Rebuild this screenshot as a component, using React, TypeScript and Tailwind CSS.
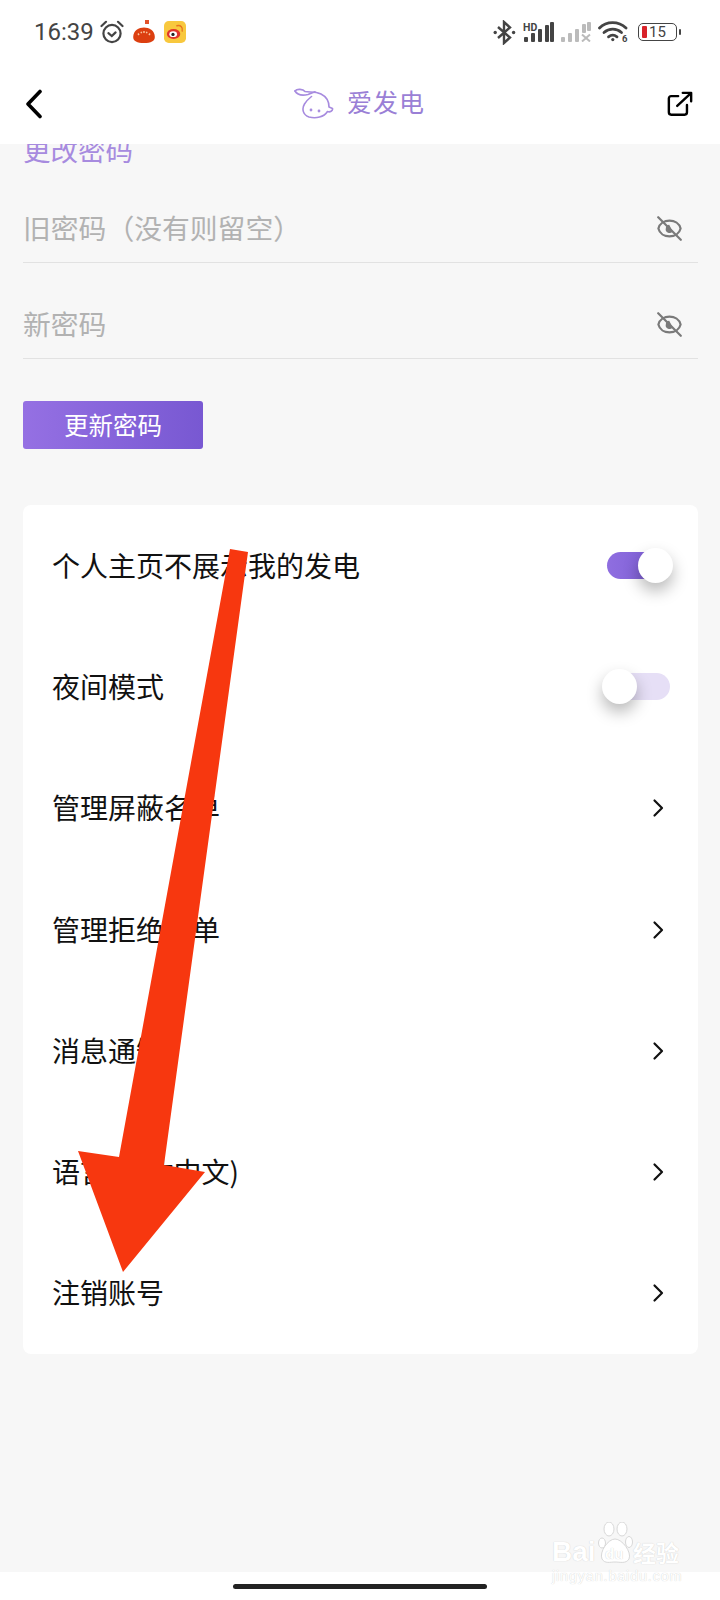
import React from "react";

const Chevron: React.FC = () => (
  <svg width="14" height="20" viewBox="0 0 14 20" fill="none" stroke="#111" strokeWidth="2.2" strokeLinecap="round" strokeLinejoin="round">
    <path d="M3.5 2.5 L11 10 L3.5 17.5" />
  </svg>
);

const EyeOff: React.FC = () => (
  <svg width="25" height="25" viewBox="0 0 25 25" fill="none" stroke="#7a7a7a" strokeWidth="2.2" strokeLinecap="round" strokeLinejoin="round">
    <path d="M1.4 12.5 C2.6 7.4 7.4 4.6 12.5 4.6 C17.6 4.6 22.4 7.4 23.6 12.5 C22.4 17.6 17.6 20.4 12.5 20.4 C7.4 20.4 2.6 17.6 1.4 12.5 Z" />
    <path d="M1.2 1.2 L23.8 23.8" />
    <path d="M8.8 12.5 A3.7 3.7 0 0 1 12.2 8.8 L15.6 15.2 A3.7 3.7 0 0 1 8.8 12.5 Z" fill="#7a7a7a" stroke="none" />
  </svg>
);

const Toggle: React.FC<{ on: boolean }> = ({ on }) => (
  <div className={on ? "relative w-[63px] h-[27px] rounded-full bg-gradient-to-r from-[#8f6ee0] to-[#7a5bd3]" : "relative w-[63px] h-[27px] rounded-full bg-[#e6dff6]"}>
    <div
      className={
        on
          ? "absolute top-[-4px] left-[31px] w-[35px] h-[35px] rounded-full bg-white shadow-[0_8px_16px_rgba(0,0,0,0.28)]"
          : "absolute top-[-4px] left-[-5px] w-[35px] h-[35px] rounded-full bg-white shadow-[0_8px_16px_rgba(0,0,0,0.28)]"
      }
    />
  </div>
);

const Row: React.FC<{ label: string; toggle?: "on" | "off" }> = ({ label, toggle }) => (
  <div className={toggle ? "h-[121.3px] flex items-center justify-between pl-[29px] pr-[28px]" : "h-[121.3px] flex items-center justify-between pl-[29px] pr-[33px]"}>
    <span className="text-[28px] text-[#111] pb-[2px] [text-spacing-trim:space-all]">{label}</span>
    {toggle ? <Toggle on={toggle === "on"} /> : <Chevron />}
  </div>
);

const Field: React.FC<{ hint: string }> = ({ hint }) => (
  <div className="h-[96px] flex items-end justify-between pb-[16px] border-b border-[#e2e2e2]">
    <span className="text-[27.8px] leading-[38px] text-[#b2b2b2] [text-spacing-trim:space-all]">{hint}</span>
    <span className="mr-[16px] mb-[5px]">
      <EyeOff />
    </span>
  </div>
);

const StatusLeft: React.FC = () => (
  <div className="flex items-center">
    <span className="font-['Roboto',sans-serif] text-[24px] text-[#444] ml-[34px] w-[66px]">16:39</span>
    {/* alarm */}
    <svg width="24" height="24" viewBox="0 0 24 24" fill="none" stroke="#444" strokeWidth="2.2" strokeLinecap="round">
      <circle cx="12" cy="13.5" r="8.6" />
      <path d="M8.4 13.2 L11.8 16 L15.6 12.4" />
      <path d="M1.5 6 L6 1.8 M22.5 6 L18 1.8" />
    </svg>
    {/* tomato */}
    <svg className="ml-[8px]" width="24" height="24" viewBox="0 0 24 24">
      <rect x="13" y="0" width="4" height="4" fill="#e2522a" />
      <path d="M1.2 17 C1.2 10 7 7.4 12 7.4 C17 7.4 22.8 10 22.8 17 C22.8 21 19 23 12 23 C5 23 1.2 21 1.2 17 Z" fill="#dc3f10" />
      <path d="M6 13.5 L7 15 M12 11 V13 M18 13.5 L17 15 M9 11.8 L9.6 13.2 M15 11.8 L14.4 13.2" stroke="#f9c8a0" strokeWidth="1.4" />
    </svg>
    {/* weibo */}
    <svg className="ml-[8px]" width="22" height="22" viewBox="0 0 23 23">
      <rect width="23" height="23" rx="5" fill="#f8c83e" />
      <ellipse cx="10" cy="13.5" rx="7" ry="5.2" fill="#e0332b" />
      <ellipse cx="9.6" cy="13.8" rx="4" ry="3" fill="#fff" />
      <circle cx="9.4" cy="14" r="1.7" fill="#222" />
      <path d="M13.5 5 C17.5 4 20 7 19 10.5" fill="none" stroke="#e8741f" strokeWidth="1.5" strokeLinecap="round" />
    </svg>
  </div>
);

const Bars: React.FC<{ color: string }> = ({ color }) => (
  <>
    <rect x="0" y="15" width="4" height="5" rx="1" fill={color} />
    <rect x="7" y="11" width="4" height="9" rx="1" fill={color} />
    <rect x="14" y="7" width="4" height="13" rx="1" fill={color} />
  </>
);

const StatusRight: React.FC = () => (
  <div className="flex items-center mr-[39px]">
    {/* bluetooth */}
    <svg width="23" height="25" viewBox="0 0 23 25" fill="none" stroke="#444" strokeWidth="2.4">
      <path d="M5 7 L17 17.5 L11 23 V2 L17 7.5 L5 18" />
      <circle cx="2.2" cy="12.5" r="1.7" fill="#444" stroke="none" />
      <circle cx="20.6" cy="12.5" r="1.7" fill="#444" stroke="none" />
    </svg>
    {/* hd signal */}
    <svg className="ml-[7px]" width="31" height="22" viewBox="0 0 31 22">
      <g transform="translate(1 1)">
        <Bars color="#444" />
        <rect x="21" y="3" width="4" height="17" rx="1" fill="#444" />
        <rect x="26" y="0" width="4" height="20" rx="1" fill="#444" />
      </g>
      <text x="0" y="9.5" fontSize="10.5" fontWeight="700" fill="#444" fontFamily="Roboto, sans-serif">HD</text>
    </svg>
    {/* no sim signal */}
    <svg className="ml-[7px]" width="31" height="20" viewBox="0 0 31 20">
      <Bars color="#bbb" />
      <rect x="21" y="2" width="4" height="9" rx="1" fill="#bbb" />
      <rect x="26" y="0" width="4" height="9" rx="1" fill="#bbb" />
      <path d="M21 12.5 L29 19.5 M29 12.5 L21 19.5" stroke="#bbb" strokeWidth="2" />
    </svg>
    {/* wifi */}
    <svg className="ml-[6px]" width="31" height="24" viewBox="0 0 31 24" fill="none" stroke="#444" strokeWidth="2.8" strokeLinecap="round">
      <path d="M1.5 8 C8.5 0.8 20.5 0.8 28 8" />
      <path d="M6 12.5 C11 8 18.5 8 23.5 12.5" />
      <path d="M10.5 16.8 C13 14.8 16.5 14.8 19 16.8" />
      <circle cx="14.8" cy="19.6" r="1.6" fill="#444" stroke="none" />
      <text x="24" y="22" fontSize="9.5" fontWeight="700" fill="#444" stroke="none" fontFamily="Roboto, sans-serif">6</text>
    </svg>
    {/* battery */}
    <div className="ml-[9px] flex items-center">
      <div className="w-[39px] h-[18px] rounded-[5px] border-[1.5px] border-[#444] flex items-center pl-[3px]">
        <div className="w-[5px] h-[12px] rounded-[1px] bg-[#d8232a]" />
        <span className="font-['Roboto',sans-serif] text-[15px] leading-[15px] text-[#444] ml-[2px]">15</span>
      </div>
      <div className="ml-[2px] w-[2px] h-[6px] rounded-sm bg-[#444]" />
    </div>
  </div>
);

const NavBar: React.FC = () => (
  <div className="h-[80px] flex items-center justify-between pl-[23px] pr-[27px]">
    <svg width="22" height="30" viewBox="0 0 22 30" fill="none" stroke="#000" strokeWidth="3.6" strokeLinecap="round" strokeLinejoin="round">
      <path d="M17 2.5 L5 15 L17 27.5" />
    </svg>
    <div className="flex items-center text-[#9a7fd6] ml-[7px]">
      {/* fish logo */}
      <svg width="40" height="32" viewBox="0 0 40 32" fill="none" stroke="#a78bdf" strokeWidth="1.6" strokeLinecap="round" strokeLinejoin="round">
        <path d="M1 3 C3 0.5 9 1 11 3.5 C16 4.5 21 3 27 6 C33 9 35 14 35 19 L38.5 20.5 C39 23 36 24.5 33.5 23.5 C30 29 22 31 15 29 C9 27 7.5 21 10.5 16 C12 13.5 15 10.5 17.5 8.5" />
        <path d="M1 3 C3 6.5 7 8 14 6.5 L21 3.8" />
        <circle cx="17" cy="22" r="0.6" />
        <circle cx="25" cy="23" r="0.6" />
      </svg>
      <span className="text-[25px] ml-[13px] tracking-[1px] pb-[5px]">爱发电</span>
    </div>
    <svg width="26" height="26" viewBox="0 0 28 28" fill="none" stroke="#000" strokeWidth="2.6" strokeLinecap="round" strokeLinejoin="round">
      <path d="M12 5.5 H4.5 C3 5.5 2 6.5 2 8 V23 C2 24.5 3 25.5 4.5 25.5 H19 C20.5 25.5 21.5 24.5 21.5 23 V15" />
      <path d="M11 16 L25.5 2.5" />
      <path d="M17 2 H26 V11" />
    </svg>
  </div>
);

const Arrow: React.FC = () => (
  <svg className="absolute left-0 top-0" width="720" height="1600" viewBox="0 0 720 1600">
    <polygon points="230,549 248,552 164,1165 205,1172 123,1272 78,1151 119,1157" fill="#f7370f" />
  </svg>
);

const Watermark: React.FC = () => (
  <div className="absolute left-[552px] top-[1522px] w-[130px] font-['Liberation_Sans',sans-serif] text-white [text-shadow:0_0_1px_#c4c4c4]">
    <div className="flex items-end h-[43px]">
      <span className="text-[28px] leading-[26px] font-bold w-[45px] shrink-0">Bai</span>
      <span className="relative w-[36px] h-[43px] shrink-0">
        <svg className="absolute left-0 top-0" width="36" height="43" viewBox="0 0 36 43" fill="#fff" stroke="#d8d8d8" strokeWidth="1">
          <ellipse cx="5" cy="21" rx="3.5" ry="5" />
          <ellipse cx="12" cy="7" rx="5" ry="7" />
          <ellipse cx="25" cy="7" rx="5" ry="7" />
          <ellipse cx="32" cy="20" rx="3.5" ry="5.5" />
          <path d="M18 17 C25 17 35 30 32 37 C29 42 23 40 18 40 C13 40 8 42 5 37 C2 30 11 17 18 17 Z" />
        </svg>
        <span className="absolute left-[8px] top-[24px] text-[15px] leading-[16px] font-bold">du</span>
      </span>
      <span className="font-['Noto_Sans_CJK_SC',sans-serif] text-[23px] leading-[26px] font-bold whitespace-nowrap">经验</span>
    </div>
    <div className="text-[14.5px] leading-[18px] tracking-[0.8px] mt-[2px] whitespace-nowrap">jingyan.baidu.com</div>
  </div>
);

const App: React.FC = () => {
  return (
    <div className="relative w-[720px] h-[1600px] flex flex-col bg-white overflow-hidden font-['Noto_Sans_CJK_SC','Noto_Sans',sans-serif]">
      <div className="h-[64px] flex items-center justify-between">
        <StatusLeft />
        <StatusRight />
      </div>
      <NavBar />
      <main className="h-[1428px] bg-[#f7f7f7] overflow-hidden pl-[23px] pr-[22px]">
        <div className="-mt-[13px] h-[35px] text-[27.5px] leading-[36px] text-[#a78bdf]">更改密码</div>
        <div className="mt-px">
          <Field hint="旧密码（没有则留空）" />
          <Field hint="新密码" />
        </div>
        <button className="mt-[42px] w-[180px] h-[48px] rounded-[3px] bg-gradient-to-r from-[#9570e3] to-[#7858d2] text-white text-[24.5px] flex items-center justify-center">
          更新密码
        </button>
        <div className="mt-[56px] bg-white rounded-[8px]">
          <Row label="个人主页不展示我的发电" toggle="on" />
          <Row label="夜间模式" toggle="off" />
          <Row label="管理屏蔽名单" />
          <Row label="管理拒绝名单" />
          <Row label="消息通知" />
          <Row label="语言(简体中文)" />
          <Row label="注销账号" />
        </div>
      </main>
      <div className="flex-1 flex items-center justify-center">
        <div className="w-[254px] h-[5px] rounded-full bg-[#222]" />
      </div>
      <Arrow />
      <Watermark />
    </div>
  );
};

export default App;
